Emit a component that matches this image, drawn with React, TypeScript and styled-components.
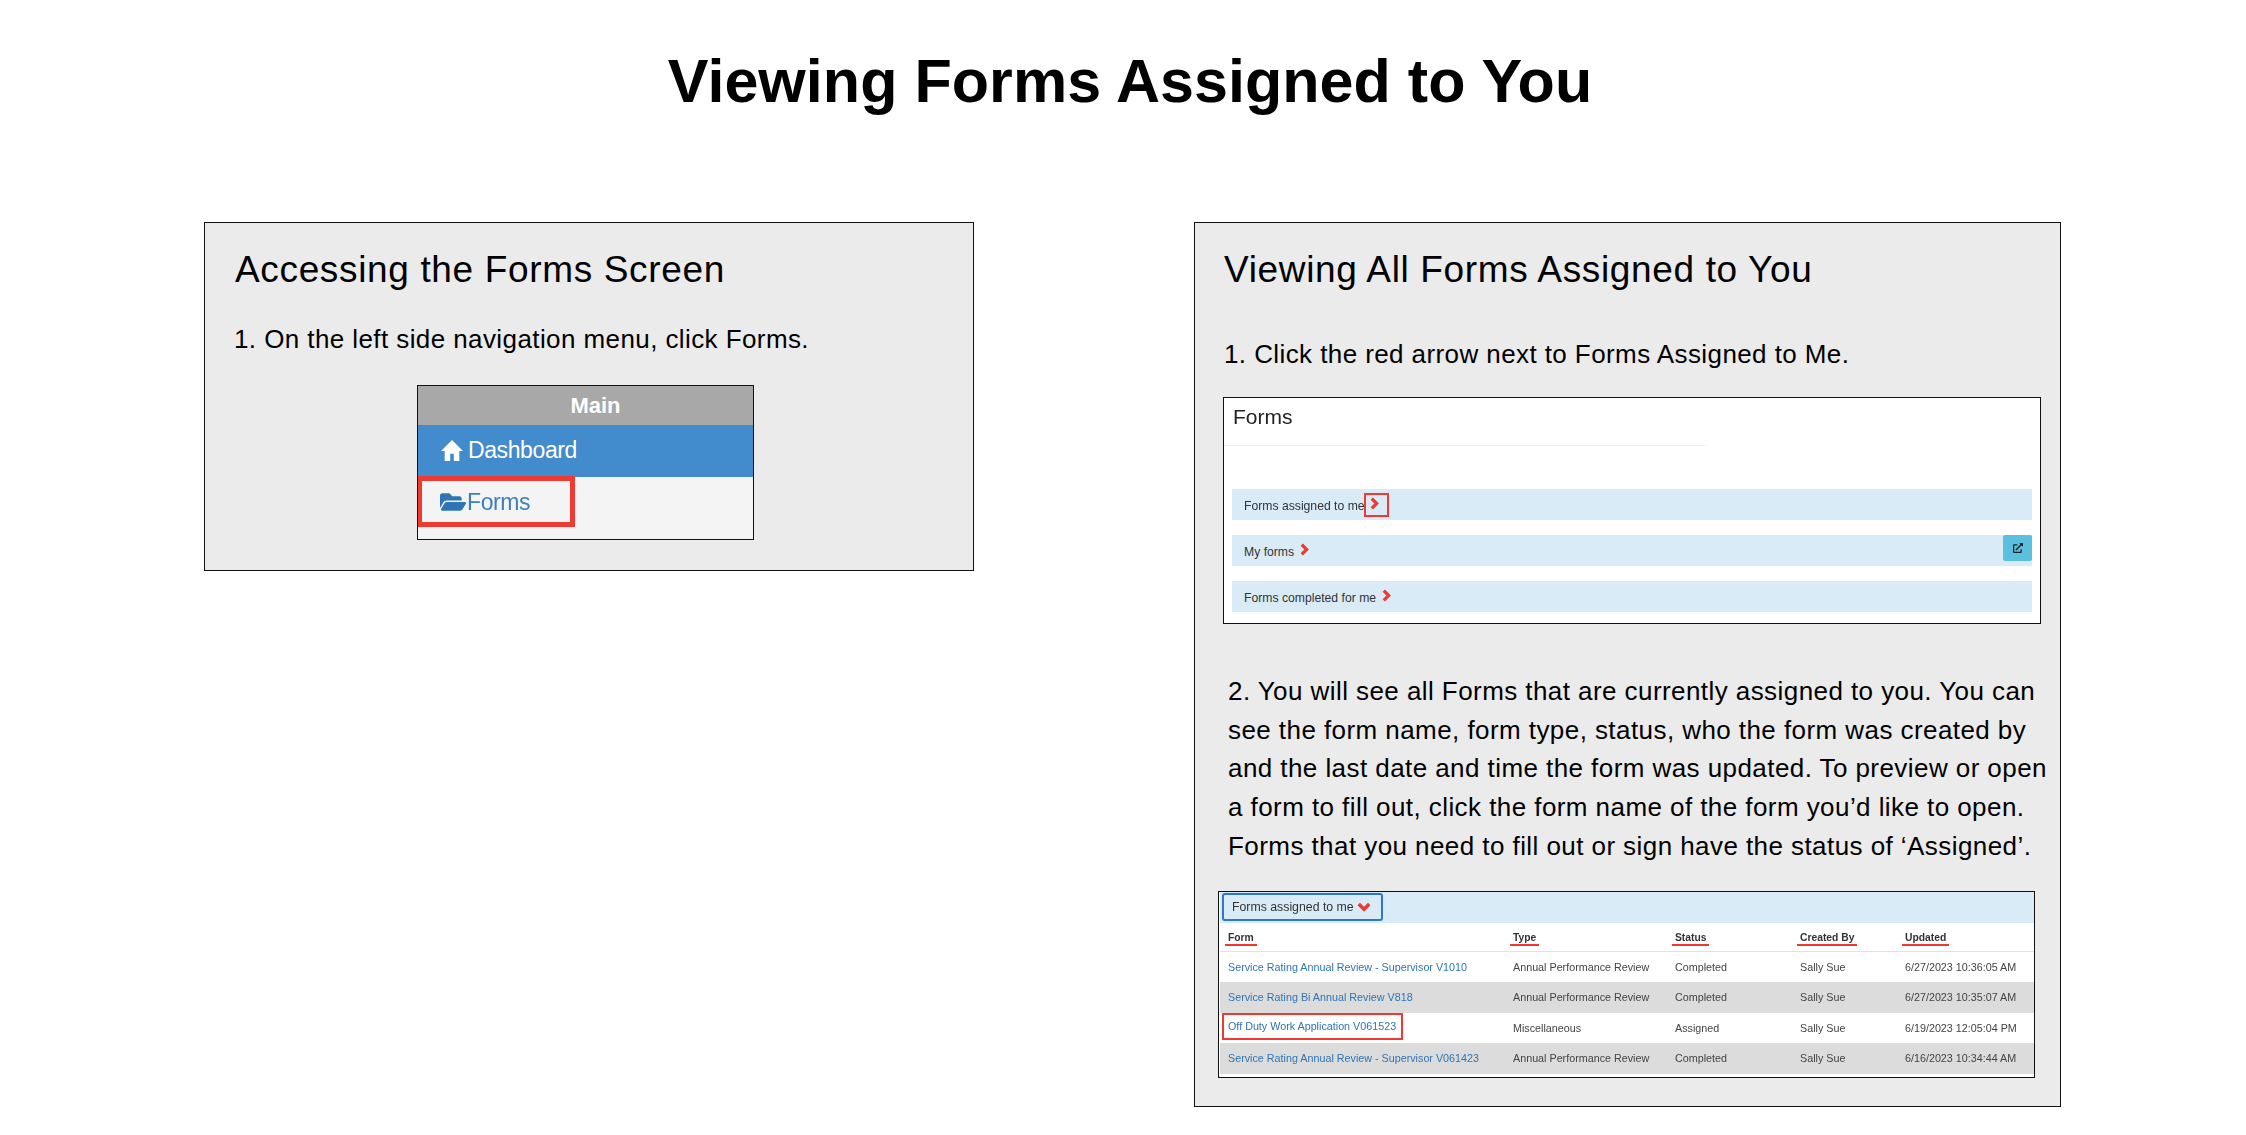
import styled, { createGlobalStyle } from 'styled-components';
import { FaFolderOpen, FaExternalLinkAlt } from 'react-icons/fa';

const GlobalStyle = createGlobalStyle`
  html, body {
    margin: 0;
    padding: 0;
    background: #fff;
  }
  body {
    font-family: 'Liberation Sans', Arial, sans-serif;
    color: #000;
  }
`;

const Page = styled.div`
  width: 2246px;
  height: 1135px;
  overflow: hidden;
  padding-top: 38px;
  box-sizing: border-box;
`;

const Title = styled.h1`
  margin: 0 0 97px 14px;
  font-size: 61px;
  line-height: 87px;
  font-weight: 700;
  letter-spacing: 0.05px;
  text-align: center;
`;

const Columns = styled.div`
  display: flex;
  align-items: flex-start;
  gap: 220px;
  padding-left: 204px;
`;

const Panel = styled.section<{ $width: number }>`
  width: ${(p) => p.$width}px;
  box-sizing: border-box;
  background: #ebebeb;
  border: 1px solid #111;
  padding: 25px 0 28px;
`;

const Heading = styled.h2<{ $left: number }>`
  margin: 0 0 0 ${(p) => p.$left}px;
  font-size: 37px;
  line-height: 44px;
  font-weight: 400;
  letter-spacing: 0.65px;
`;

const Step = styled.p<{ $top: number }>`
  margin: ${(p) => p.$top}px 0 0 29px;
  font-size: 26px;
  line-height: 38px;
  letter-spacing: 0.41px;
`;

const Paragraph = styled.p`
  margin: 48px 0 0 33px;
  font-size: 26px;
  line-height: 38.7px;
  letter-spacing: 0.43px;
  white-space: nowrap;
`;

/* pasted screenshots are slightly soft, keep that look */
const Soft = styled.div`
  filter: blur(0.5px);
`;

const NavShot = styled.div`
  width: 337px;
  height: 155px;
  box-sizing: border-box;
  margin: 27px 0 2px 212px;
  border: 1px solid #111;
  background: #f4f4f4;
`;

const NavHead = styled.div`
  height: 39px;
  background: #a8a8a8;
  color: #fff;
  font-size: 22px;
  font-weight: 700;
  line-height: 39px;
  text-align: center;
  padding-left: 20px;
`;

const NavActive = styled.div`
  height: 52px;
  background: #428bcc;
  color: #fff;
  display: flex;
  align-items: center;
  gap: 5px;
  padding: 0 0 2px 23px;
  box-sizing: border-box;
  font-size: 23px;
  letter-spacing: -0.4px;
`;

const NavBox = styled.div`
  width: 157px;
  height: 51px;
  box-sizing: border-box;
  margin-top: -1px;
  border: 5px solid #ee3a32;
  border-left-width: 4px;
  display: flex;
  align-items: center;
  padding: 1px 0 0 18px;
  gap: 1px;
  color: #3d7fb8;
  font-size: 23px;
  letter-spacing: -0.4px;
`;

const FormsShot = styled.div`
  width: 818px;
  height: 227px;
  box-sizing: border-box;
  margin: 24px 0 0 28px;
  border: 1px solid #111;
  background: #fff;
  padding: 0 8px;
`;

const ShotTitle = styled.div`
  height: 47px;
  padding: 6px 0 0 1px;
  box-sizing: border-box;
  font-size: 21px;
  line-height: 26px;
  color: #222;
`;

const ShotRule = styled.div`
  width: 481px;
  height: 1px;
  margin-left: -8px;
  background: #eeeeee;
`;

const FormRows = styled.div`
  display: flex;
  flex-direction: column;
  gap: 15px;
  margin-top: 43px;
`;

const FormRow = styled.div`
  position: relative;
  height: 31px;
  background: #d9ebf7;
  display: flex;
  align-items: center;
  padding: 3px 0 0 12px;
  box-sizing: border-box;
  font-size: 12.2px;
  color: #333;
`;

const Arrow = styled.span`
  display: inline-flex;
  margin: -6px 0 0 4px;
`;

const ArrowBox = styled.span`
  display: inline-flex;
  align-items: center;
  justify-content: center;
  width: 25px;
  height: 24px;
  box-sizing: border-box;
  margin: -3px 0 0 -1px;
  border: 2px solid #ee3a32;
  padding: 0 4px 3px 0;
`;

const LinkButton = styled.span`
  position: absolute;
  right: 0;
  top: 0;
  width: 29px;
  height: 26px;
  display: flex;
  align-items: center;
  justify-content: center;
  border-radius: 2px;
  background: #5bc0de;
  color: #222;
  font-size: 10px;
`;

const TableShot = styled.div`
  width: 817px;
  height: 187px;
  box-sizing: border-box;
  margin: 25px 0 0 23px;
  border: 1px solid #111;
  background: #fff;
  padding-left: 1px;
`;

const TableBand = styled.div`
  height: 31px;
  background: #d9ebf7;
  display: flex;
  align-items: center;
  padding-left: 2px;
`;

const ToggleButton = styled.div`
  width: 161px;
  height: 28px;
  box-sizing: border-box;
  border: 2px solid #2f77c9;
  border-radius: 3px;
  display: flex;
  align-items: center;
  padding-left: 8px;
  font-size: 12.3px;
  color: #333;
  gap: 3px;
`;

const Columnset = styled.div<{ $alt?: boolean; $head?: boolean }>`
  display: grid;
  grid-template-columns: 285px 162px 125px 105px 1fr;
  align-items: center;
  height: ${(p) => (p.$head ? 28 : 30.5)}px;
  padding-left: 8px;
  box-sizing: ${(p) => (p.$head ? 'content-box' : 'border-box')};
  font-size: 10.75px;
  white-space: nowrap;
  color: #444;
  background: ${(p) => (p.$alt ? '#dcdcdc' : '#fff')};
  border-bottom: ${(p) => (p.$head ? '1px solid #e2e2e2' : '0')};
`;

const HeadCell = styled.span`
  justify-self: start;
  margin: 4px 0 0 -3px;
  padding: 0 3px 1px;
  border-bottom: 2px solid #ee3a32;
  font-size: 10.3px;
  font-weight: 700;
  color: #333;
`;

const FormLink = styled.span<{ $marked?: boolean }>`
  color: #2f75b5;
  justify-self: start;
  ${(p) =>
    p.$marked
      ? `
    margin: -3px 0 0 -6px;
    padding-left: 4px;
    width: 181px;
    height: 27px;
    line-height: 23px;
    box-sizing: border-box;
    border: 2px solid #ee3a32;
  `
      : ''}
`;

function Chevron({ down = false, size = 13 }: { down?: boolean; size?: number }) {
  return (
    <svg width={size} height={size} viewBox="0 0 12 12" style={{ display: 'block' }}>
      <path
        d={down ? 'M1.5 3.5 L6 8 L10.5 3.5' : 'M3.5 1.5 L8 6 L3.5 10.5'}
        fill="none"
        stroke="#ee3a32"
        strokeWidth="3"
      />
    </svg>
  );
}

function HomeIcon() {
  return (
    <svg width="22" height="22" viewBox="0 0 24 24" fill="#fff">
      <path d="M12 1 L24 13 H20 V24 H14 V16 H10 V24 H4 V13 H0 Z" />
    </svg>
  );
}

const tableRows = [
  ['Service Rating Annual Review - Supervisor V1010', 'Annual Performance Review', 'Completed', '6/27/2023 10:36:05 AM'],
  ['Service Rating Bi Annual Review V818', 'Annual Performance Review', 'Completed', '6/27/2023 10:35:07 AM'],
  ['Off Duty Work Application V061523', 'Miscellaneous', 'Assigned', '6/19/2023 12:05:04 PM'],
  ['Service Rating Annual Review - Supervisor V061423', 'Annual Performance Review', 'Completed', '6/16/2023 10:34:44 AM'],
];

export default function App() {
  return (
    <Page>
      <GlobalStyle />
      <Title>Viewing Forms Assigned to You</Title>
      <Columns>
        <Panel $width={770}>
          <Heading $left={30}>Accessing the Forms Screen</Heading>
          <Step $top={28}>1. On the left side navigation menu, click Forms.</Step>
          <NavShot>
            <Soft>
              <NavHead>Main</NavHead>
              <NavActive>
                <HomeIcon />
                Dashboard
              </NavActive>
              <NavBox>
                <FaFolderOpen size={26} color="#2f75b5" />
                Forms
              </NavBox>
            </Soft>
          </NavShot>
        </Panel>
        <Panel $width={867}>
          <Heading $left={29}>Viewing All Forms Assigned to You</Heading>
          <Step $top={43}>1. Click the red arrow next to Forms Assigned to Me.</Step>
          <FormsShot>
            <Soft>
              <ShotTitle>Forms</ShotTitle>
              <ShotRule />
              <FormRows>
                <FormRow>
                  Forms assigned to me
                  <ArrowBox>
                    <Chevron />
                  </ArrowBox>
                </FormRow>
                <FormRow>
                  My forms
                  <Arrow>
                    <Chevron />
                  </Arrow>
                  <LinkButton>
                    <FaExternalLinkAlt />
                  </LinkButton>
                </FormRow>
                <FormRow>
                  Forms completed for me
                  <Arrow>
                    <Chevron />
                  </Arrow>
                </FormRow>
              </FormRows>
            </Soft>
          </FormsShot>
          <Paragraph>
            2. You will see all Forms that are currently assigned to you. You can
            <br />
            see the form name, form type, status, who the form was created by
            <br />
            and the last date and time the form was updated. To preview or open
            <br />
            a form to fill out, click the form name of the form you’d like to open.
            <br />
            Forms that you need to fill out or sign have the status of ‘Assigned’.
          </Paragraph>
          <TableShot>
            <Soft>
              <TableBand>
                <ToggleButton>
                  Forms assigned to me
                  <Chevron down size={14} />
                </ToggleButton>
              </TableBand>
              <Columnset $head>
                <HeadCell>Form</HeadCell>
                <HeadCell>Type</HeadCell>
                <HeadCell>Status</HeadCell>
                <HeadCell>Created By</HeadCell>
                <HeadCell>Updated</HeadCell>
              </Columnset>
              {tableRows.map((row, i) => (
                <Columnset key={row[0]} $alt={i % 2 === 1}>
                  <FormLink $marked={i === 2}>{row[0]}</FormLink>
                  <span>{row[1]}</span>
                  <span>{row[2]}</span>
                  <span>Sally Sue</span>
                  <span>{row[3]}</span>
                </Columnset>
              ))}
            </Soft>
          </TableShot>
        </Panel>
      </Columns>
    </Page>
  );
}
